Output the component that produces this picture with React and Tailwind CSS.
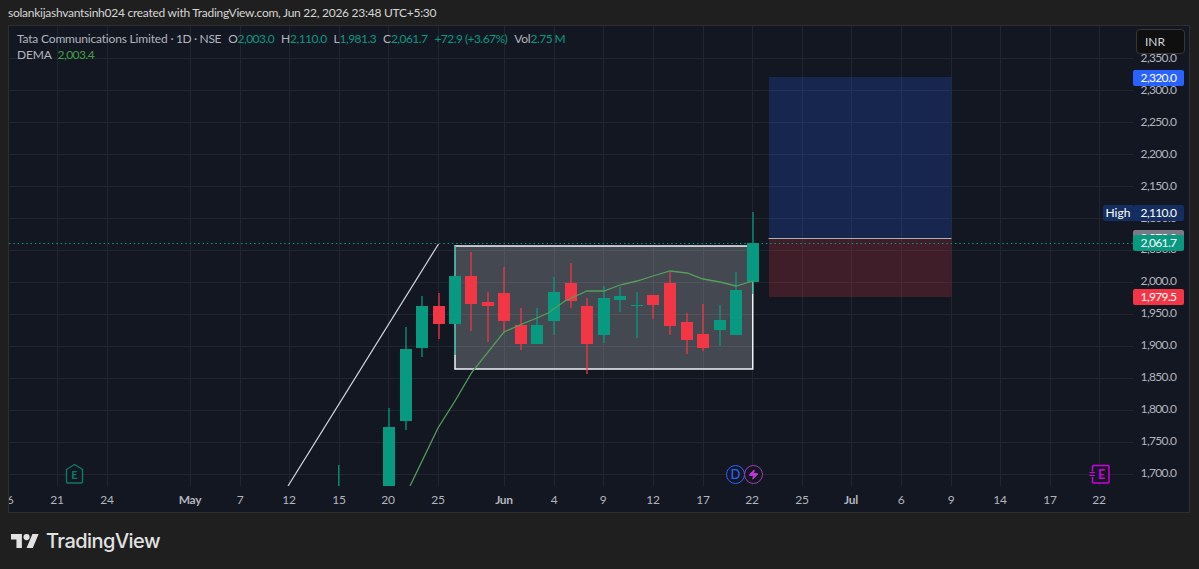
import { Zap } from 'lucide-react';

const UP = '#089981';
const DOWN = '#f23645';

// x is the candle's left edge, wick is [top, bottom], body is [top, bottom]
const candles = [
  { x: 383, c: UP, wick: [408, 486], body: [427, 486] },
  { x: 400, c: UP, wick: [327, 430], body: [349, 421] },
  { x: 416, c: UP, wick: [296, 357], body: [306, 348] },
  { x: 433, c: DOWN, wick: [293, 339], body: [306, 324] },
  { x: 449, c: UP, wick: [246, 355], body: [276, 324] },
  { x: 465, c: DOWN, wick: [252, 331], body: [276, 304] },
  { x: 482, c: DOWN, wick: [292, 342], body: [302, 306] },
  { x: 498, c: DOWN, wick: [267, 333], body: [293, 321] },
  { x: 515, c: DOWN, wick: [308, 350], body: [325, 344] },
  { x: 531, c: UP, wick: [308, 344], body: [325, 344] },
  { x: 548, c: UP, wick: [277, 335], body: [292, 321] },
  { x: 565, c: DOWN, wick: [263, 308], body: [283, 301] },
  { x: 581, c: DOWN, wick: [298, 374], body: [306, 344] },
  { x: 598, c: UP, wick: [286, 343], body: [298, 335] },
  { x: 614, c: UP, wick: [287, 312], body: [296, 300] },
  { x: 631, c: UP, wick: [292, 338], body: [305, 306] },
  { x: 647, c: DOWN, wick: [295, 319], body: [295, 305] },
  { x: 664, c: DOWN, wick: [272, 335], body: [283, 326] },
  { x: 681, c: DOWN, wick: [313, 354], body: [322, 340] },
  { x: 697, c: DOWN, wick: [304, 351], body: [334, 348] },
  { x: 714, c: UP, wick: [305, 346], body: [320, 330] },
  { x: 730, c: UP, wick: [272, 335], body: [290, 335] },
  { x: 747, c: UP, wick: [212, 294], body: [243, 282] },
];

const demaPoints = '410,486 438,428 455,401 472,372 504,332 522,324 537,318 548,313 565,301 587,291 604,291 620,285 637,281 653,276 670,271 687,273 703,279 720,282 736,286 753,281';

const prices = ['2,350.0', '2,300.0', '2,250.0', '2,200.0', '2,150.0', '2,100.0', '2,050.0', '2,000.0', '1,950.0', '1,900.0', '1,850.0', '1,800.0', '1,750.0', '1,700.0'];
const gridY = prices.map((_, i) => 58.8 + i * 31.94);
const gridX = [57, 107, 190, 240, 289, 339, 388, 438, 504, 554, 603, 653, 703, 752, 802, 851, 901, 951, 1000, 1050, 1099];

const dates = [
  { x: 10, t: '6' }, { x: 57, t: '21' }, { x: 107, t: '24' }, { x: 190, t: 'May', b: true }, { x: 240, t: '7' },
  { x: 289, t: '12' }, { x: 339, t: '15' }, { x: 388, t: '20' }, { x: 438, t: '25' }, { x: 504, t: 'Jun', b: true },
  { x: 554, t: '4' }, { x: 603, t: '9' }, { x: 653, t: '12' }, { x: 703, t: '17' }, { x: 752, t: '22' },
  { x: 802, t: '25' }, { x: 851, t: 'Jul', b: true }, { x: 901, t: '6' }, { x: 951, t: '9' }, { x: 1000, t: '14' },
  { x: 1050, t: '17' }, { x: 1099, t: '22' },
];

function Candle({ x, c, wick, body }) {
  return (
    <g>
      <rect x={x + 5.25} y={wick[0]} width="1.5" height={wick[1] - wick[0]} fill={c} opacity="0.85" />
      <rect x={x} y={body[0]} width="12" height={body[1] - body[0]} fill={c} />
    </g>
  );
}

function Num({ children }) {
  return <span className="text-[#089981] tracking-[-0.55px]">{children}</span>;
}

function PriceTag({ top, className, children }) {
  return (
    <div
      className={`absolute left-0 w-[51px] h-[16px] flex items-center justify-center rounded-[2px] text-white tracking-[-0.65px] ${className}`}
      style={{ top }}
    >
      {children}
    </div>
  );
}

export default function App() {
  return (
    <div className="w-[1199px] h-[569px] flex flex-col bg-[#1f1f1f] overflow-hidden font-['Lato','Liberation_Sans',sans-serif]">
      <div className="h-[25px] flex items-center pl-[8px] text-[12px] text-[#d6d6d6] tracking-[-0.26px]">
        solankijashvantsinh024 created with TradingView.com, Jun 22, 2026 23:48 UTC+5:30
      </div>

      <div className="ml-[8px] w-[1182px] h-[488px] flex flex-col border border-[#2e2e2e] bg-[#131722]">
        <div className="flex h-[460px]">
          {/* plot */}
          <div className="relative w-[1124px] h-[460px] overflow-hidden">
            <svg className="block" width="1124" height="460" viewBox="9 26 1124 460">
              {gridX.map((x) => (
                <line key={x} x1={x + 0.5} x2={x + 0.5} y1="26" y2="486" stroke="#21252f" />
              ))}
              {gridY.map((y) => (
                <line key={y} x1="9" x2="1133" y1={Math.floor(y) + 0.5} y2={Math.floor(y) + 0.5} stroke="#21252f" />
              ))}

              <rect x="769" y="77" width="182.5" height="161" fill="#2962ff" opacity="0.2" />
              <rect x="769" y="238" width="182.5" height="59" fill="#f23645" opacity="0.2" />

              <rect x="338" y="465" width="1.5" height="21" fill={UP} opacity="0.85" />
              <rect x="455" y="246" width="297.75" height="123" fill="#ffffff" opacity="0.21" />
              <rect x="455" y="246" width="297.75" height="123" fill="none" stroke="#f0f3fa" strokeWidth="1.5" />
              <line x1="288" y1="486" x2="438.5" y2="244" stroke="#d6d8de" strokeWidth="1.2" />
              <line x1="768.5" x2="951.5" y1="238.5" y2="238.5" stroke="#b0b0b0" />
              <line x1="9" x2="1133" y1="243.5" y2="243.5" stroke={UP} strokeDasharray="1.5 2.8" />

              {candles.map((c) => (
                <Candle key={c.x} {...c} />
              ))}
              <polyline points={demaPoints} fill="none" stroke="#559e5c" strokeWidth="1.3" />

              {/* earnings marker */}
              <path d="M66.5 469.5 L74.5 464.5 L82.5 469.5 V482 a1 1 0 0 1 -1 1 H67.5 a1 1 0 0 1 -1 -1 Z" fill="#131722" stroke="#0b7a66" strokeWidth="1.4" />
              <text x="74.5" y="479" textAnchor="middle" fontSize="11" fontWeight="700" fill="#0b7a66">E</text>

              {/* next earnings marker */}
              <path d="M1092.5 471.5 V466.5 a1 1 0 0 1 1 -1 H1108 a1 1 0 0 1 1 1 V482 a1 1 0 0 1 -1 1 H1093.5 a1 1 0 0 1 -1 -1 V477" fill="#131722" stroke="#cc00e0" strokeWidth="1.5" />
              <path d="M1089.5 472.5 H1095 M1089.5 475.5 H1095" stroke="#cc00e0" strokeWidth="1.2" />
              <text x="1101.5" y="479" textAnchor="middle" fontSize="12.5" fontWeight="700" fill="#cc00e0">E</text>
            </svg>

            {/* dividend + split markers */}
            <div className="absolute left-[717px] top-[439px] w-[19px] h-[19px] rounded-full border-[1.5px] border-[#2962ff] bg-[#131722] flex items-center justify-center text-[13px] font-medium text-[#2962ff]">
              D
            </div>
            <div className="absolute left-[735px] top-[439px] w-[19px] h-[19px] rounded-full border-[1.5px] border-[#9c3fb5] bg-[#131722] flex items-center justify-center">
              <Zap className="w-[11px] h-[11px] text-[#c436d8]" fill="currentColor" />
            </div>

            {/* legend */}
            <div className="absolute left-[8px] top-[5px] text-[12px] leading-[16px] text-[#b2b5be] tracking-[-0.18px]">
              <div className="flex whitespace-nowrap">
                <span>Tata Communications Limited</span>
                <span className="ml-[3px] tracking-[-0.35px]">· 1D · NSE</span>
                <span className="ml-[7px]">O<Num>2,003.0</Num></span>
                <span className="ml-[7px]">H<Num>2,110.0</Num></span>
                <span className="ml-[7px]">L<Num>1,981.3</Num></span>
                <span className="ml-[7px]">C<Num>2,061.7</Num></span>
                <span className="ml-[7px]"><Num>+72.9 (+3.67%)</Num></span>
                <span className="ml-[7px]">Vol<Num>2.75 M</Num></span>
              </div>
              <div className="flex">
                <span>DEMA</span>
                <span className="ml-[6px] text-[#43a047] tracking-[-0.55px]">2,003.4</span>
              </div>
            </div>

            {/* high label, left half */}
            <div className="absolute right-0 top-[179px] w-[30px] h-[16px] flex items-center justify-center rounded-l-[2px] bg-[#142e61] text-white text-[12px]">
              High
            </div>
          </div>

          {/* price axis */}
          <div className="relative flex-1 text-[12px] text-[#b2b5be]">
            {prices.map((p, i) => (
              <div
                key={p}
                className="absolute left-0 w-[51px] h-[16px] flex items-center justify-center tracking-[-0.65px]"
                style={{ top: gridY[i] - 35 }}
              >
                {p}
              </div>
            ))}
            <div className="absolute left-[3px] top-[3px] w-[49px] h-[25px] rounded-[4px] border border-[#363636] bg-[#0f0f0f] text-[#d1d4dc] pl-[8px] flex items-center">
              INR
            </div>
            <PriceTag top={44} className="bg-[#2962ff]">2,320.0</PriceTag>
            <PriceTag top={179} className="bg-[#142e61]">2,110.0</PriceTag>
            <PriceTag top={204} className="bg-[#787b86]">2,070.0</PriceTag>
            <PriceTag top={209} className="bg-[#089981]">2,061.7</PriceTag>
            <PriceTag top={263} className="bg-[#f23645]">1,979.5</PriceTag>
          </div>
        </div>

        {/* time axis */}
        <div className="relative h-[26px] text-[12px] text-[#b2b5be] overflow-hidden tracking-[-0.3px]">
          {dates.map((d) => (
            <span
              key={d.x}
              className={`absolute top-[5px] -translate-x-1/2 ${d.b ? 'font-bold' : ''}`}
              style={{ left: d.x - 9 }}
            >
              {d.t}
            </span>
          ))}
        </div>
      </div>

      {/* footer logo */}
      <div className="flex-1 flex items-center pl-[11px] gap-[7px] text-[#e2e2e2]">
        <svg width="28" height="14" viewBox="0 4 36 18" fill="currentColor">
          <path d="M14 22H7V11H0V4h14v18zM28 22h-8l7.5-18h8L28 22z" />
          <circle cx="20" cy="8" r="4" />
        </svg>
        <span className="text-[20px] font-medium font-['Inter',sans-serif] tracking-[-0.55px]">TradingView</span>
      </div>
    </div>
  );
}
